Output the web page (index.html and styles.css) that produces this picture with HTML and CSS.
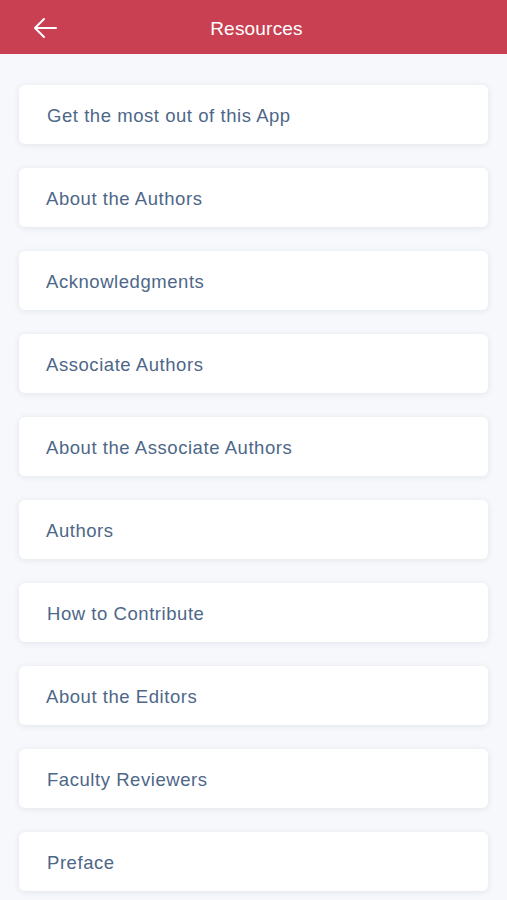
FILE: index.html
```html
<!DOCTYPE html>
<html>
<head>
<meta charset="utf-8">
<link rel="stylesheet" href="styles.css">
</head>
<body>
<header class="topbar">
  <svg class="back" width="26" height="22" viewBox="0 0 26 22"><path d="M24 11H3M12 2L3 11l9 9" fill="none" stroke="#fff" stroke-width="2" stroke-linecap="round" stroke-linejoin="round"/></svg>
  <h1 class="title">Resources</h1>
</header>
<main class="list">
  <div class="card card-in">Get the most out of this App</div>
  <div class="card">About the Authors</div>
  <div class="card">Acknowledgments</div>
  <div class="card">Associate Authors</div>
  <div class="card">About the Associate Authors</div>
  <div class="card">Authors</div>
  <div class="card card-in">How to Contribute</div>
  <div class="card">About the Editors</div>
  <div class="card card-in">Faculty Reviewers</div>
  <div class="card card-in">Preface</div>
</main>
</body>
</html>
```
FILE: styles.css
```css
html, body { margin: 0; padding: 0; }
body {
  background: #f6f8fb;
  font-family: "Liberation Sans", Arial, sans-serif;
  width: 507px;
  height: 900px;
  overflow: hidden;
}
.topbar {
  height: 54px;
  background: #c94053;
  display: flex;
  align-items: center;
  justify-content: center;
  position: relative;
}
.back {
  position: absolute;
  left: 32px;
  top: 17px;
}
.title {
  margin: 0;
  color: #fff;
  font-weight: normal;
  font-size: 19px;
  letter-spacing: 0.2px;
  padding-left: 6px;
  padding-top: 3px;
}
.list {
  display: flex;
  flex-direction: column;
  gap: 24px;
  padding: 31px 19px 0 19px;
}
.card {
  height: 59px;
  background: #fff;
  border-radius: 6px;
  box-shadow: 0 1px 6px rgba(40, 60, 90, 0.10);
  display: flex;
  align-items: center;
  padding-left: 27px;
  padding-top: 2px;
  box-sizing: border-box;
  font-size: 18.5px;
  letter-spacing: 0.55px;
  color: #4d6788;
}
.card-in { padding-left: 28px; }
```
